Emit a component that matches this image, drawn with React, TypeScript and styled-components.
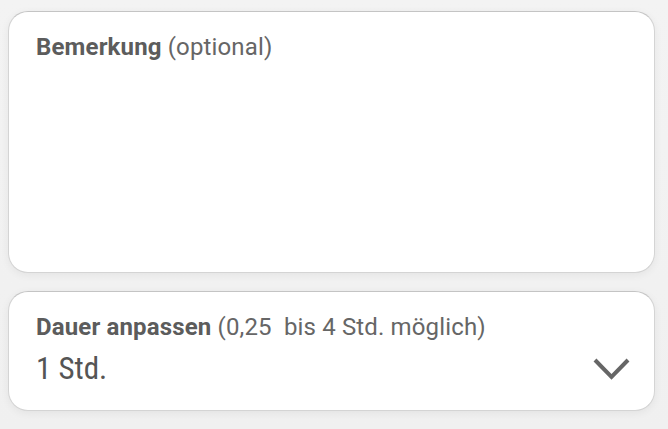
import React from "react";
import styled, { createGlobalStyle } from "styled-components";

const Global = createGlobalStyle`
  html, body { margin: 0; padding: 0; background: #f2f2f2; }
  body { font-family: "Roboto", "Liberation Sans", sans-serif; }
`;

const Page = styled.div`
  width: 668px;
  height: 429px;
  box-sizing: border-box;
  padding: 11px 13px 0 8px;
  display: flex;
  flex-direction: column;
  gap: 18px;
  background: linear-gradient(#f3f3f3, #f0f0f0);
`;

const Card = styled.div<{ $h: number }>`
  height: ${(p) => p.$h}px;
  box-sizing: border-box;
  background: #fff;
  border: 1px solid #d4d4d4;
  border-top-color: #c4c4c4;
  border-radius: 20px;
  box-shadow: 0 2px 8px rgba(0, 0, 0, 0.06);
  padding: 0 27px;
`;

const Label = styled.div`
  font-size: 24px;
  letter-spacing: 0.15px;
  color: #666;
  line-height: 28px;
  b { font-weight: 700; color: #5c5c5c; }
`;

const NoteLabel = styled(Label)`
  padding-top: 21px;
`;

const SelectLabel = styled(Label)`
  padding-top: 21px;
`;

const Row = styled.div`
  display: flex;
  align-items: center;
  justify-content: space-between;
  margin-top: 10px;
`;

const Value = styled.div`
  font-size: 31px;
  font-stretch: 85%;
  color: #555;
  line-height: 36px;
`;

const Chevron = styled.svg`
  width: 37px;
  height: 24px;
  margin-right: -3px;
`;

export default function App() {
  return (
    <>
      <Global />
      <Page>
        <Card $h={262}>
          <NoteLabel>
            <b>Bemerkung</b> (optional)
          </NoteLabel>
        </Card>
        <Card $h={120}>
          <SelectLabel>
            <b>Dauer anpassen</b> (0,25&nbsp; bis 4 Std. möglich)
          </SelectLabel>
          <Row>
            <Value>1 Std.</Value>
            <Chevron viewBox="0 0 37 24">
              <polyline points="2,3 18.5,20 35,3" fill="none" stroke="#666" strokeWidth="4" />
            </Chevron>
          </Row>
        </Card>
      </Page>
    </>
  );
}
